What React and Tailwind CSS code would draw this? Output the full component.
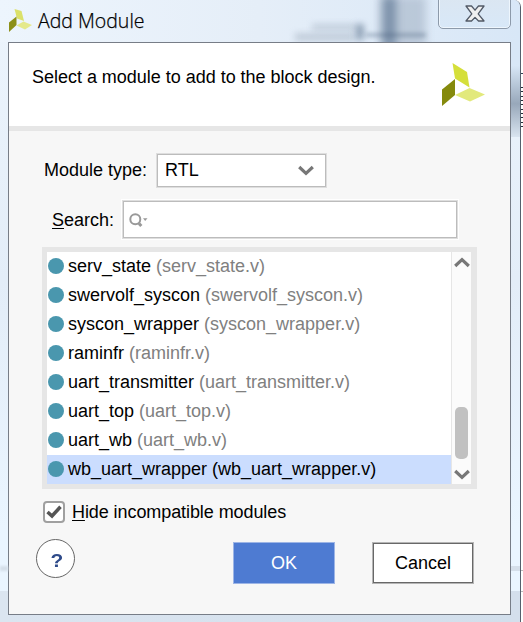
const modules = [
  { name: "serv_state", file: "(serv_state.v)" },
  { name: "swervolf_syscon", file: "(swervolf_syscon.v)" },
  { name: "syscon_wrapper", file: "(syscon_wrapper.v)" },
  { name: "raminfr", file: "(raminfr.v)" },
  { name: "uart_transmitter", file: "(uart_transmitter.v)" },
  { name: "uart_top", file: "(uart_top.v)" },
  { name: "uart_wb", file: "(uart_wb.v)" },
  { name: "wb_uart_wrapper", file: "(wb_uart_wrapper.v)", selected: true },
];

function Logo({ className }) {
  return (
    <svg viewBox="0 0 43 43" className={className} preserveAspectRatio="none">
      <path d="M10.5 0 25 9 27.5 24.5 13 15.5Z" fill="#d5df3a" />
      <path d="M0 26.5 13 16V32L0 43Z" fill="#858a0c" />
      <path d="M13 32 27.5 25 43 31.5 28 38.5Z" fill="#e2e97c" />
    </svg>
  );
}

function SmallLogo({ className }) {
  return (
    <svg viewBox="0 0 23 23" className={className}>
      <path d="M5.5 0 12.5 2 15 12 8 9.5Z" fill="#dbe16a" />
      <path d="M0 13.5 7.5 7.5V16L0 23Z" fill="#8c9018" />
      <path d="M7.5 16.5 14.5 12.5 23 16 16 20.5Z" fill="#e4e98c" />
    </svg>
  );
}

function Chevron({ up }) {
  return (
    <svg viewBox="0 0 16 11" className="block h-[11px] w-4">
      <path d={up ? "M1.2 9 8 2.7 14.8 9" : "M1.2 2 8 8.3 14.8 2"} fill="none" stroke="#777" strokeWidth="3.2" />
    </svg>
  );
}

function TitleBar() {
  return (
    <div className="relative flex h-[42px] shrink-0 items-start overflow-hidden bg-linear-to-r from-[#edf5fd] via-[#e5eef8] to-[#d8e7f7]">
      <div className="absolute top-[24px] left-[312px] h-1.5 w-[44px] bg-[#8795a6]/35 blur-[3px]" />
      <div className="absolute top-[33px] left-[295px] h-2 w-[60px] bg-[#8795a6]/35 blur-[3px]" />
      <div className="absolute top-[24px] left-[356px] h-[16px] w-2 bg-[#465d79]/50 blur-[3px]" />
      <div className="absolute -top-1 left-[379px] h-[52px] w-[47px] bg-[#a3b3c5]/60 blur-[4px]" />
      <div className="absolute -top-1 left-[383px] h-[52px] w-[13px] bg-[#526d8b]/60 blur-[4px]" />
      <div className="absolute top-[33px] left-[366px] h-1 w-[60px] bg-[#465d79]/35 blur-[2px]" />
      <SmallLogo className="mt-[9px] ml-[9px] h-[23px] w-[23px] shrink-0" />
      <span className="mt-[8px] ml-[6px] font-['Open_Sans',sans-serif] text-[19.5px] leading-[26px] font-light whitespace-nowrap text-black [-webkit-text-stroke:0.25px_black]">
        Add Module
      </span>
      <div className="absolute top-[-6px] left-[438px] flex h-[35px] w-[73px] items-center justify-center rounded-[5px] border border-[#8d9aaa] bg-linear-to-b from-[#dbe6f1] to-[#d8e8f8] shadow-[inset_0_0_0_1px_#eef6fd]">
        <svg viewBox="0 0 20 18" className="mt-[5px] h-[18px] w-5">
          <path d="M1 1H6.5L10 5.2 13.5 1H19L13.2 8.8 19 16H13.5L10 12.4 6.5 16H1L6.8 8.8Z" fill="#f0f0f0" stroke="#515966" strokeWidth="1.3" strokeLinejoin="round" />
        </svg>
      </div>
    </div>
  );
}

function ModuleList() {
  return (
    <div className="mt-[8px] ml-[33px] flex h-[242px] w-[435px] border-5 border-r-6 border-[#e6e6e6] bg-white">
      <div className="w-[404px]">
        {modules.map((m) => (
          <div key={m.name} className={`flex h-[29px] items-center pl-px whitespace-nowrap ${m.selected ? "bg-[#cbddfe]" : ""}`}>
            <span className="mb-px size-4 shrink-0 rounded-full bg-[#4a97ae]" />
            <span className="ml-1">{m.name}</span>
            <span className={`ml-[5px] ${m.selected ? "text-black" : "text-[#808080]"}`}>{m.file}</span>
          </div>
        ))}
      </div>
      <div className="flex w-5 flex-col items-center border-l border-[#e6e6e6] bg-[#fbfbfb] pt-[5px] pb-[4px]">
        <Chevron up />
        <div className="mt-auto mb-[10px] h-[52px] w-[13px] rounded-[5px] bg-[#c1c1c1]" />
        <Chevron />
      </div>
    </div>
  );
}

export default function App() {
  return (
    <div className="flex h-[622px] w-[523px] overflow-hidden bg-white font-['Liberation_Sans',Arial,sans-serif] text-[18px] leading-[21px] text-black">
      <div className="flex h-[622px] w-[521px] shrink-0 flex-col overflow-hidden rounded-tr-[7px] border-r border-[#56606d] bg-linear-to-b from-[#edf5fd] via-[#e3edf8] via-45% to-[#eaf5ff] to-85%">
        <TitleBar />
        <div className="flex h-[580px] shrink-0">
          <div className="flex w-2 flex-col">
            <div className="mt-[524px] h-[5px] bg-[#d5dfea] blur-[1px]" />
            <div className="mt-5 grow bg-[#dbe5f0]" />
          </div>
          <div className="flex w-[503px] shrink-0 flex-col">
            <div className="h-[573px] border border-[#777d87] bg-[#f7f7f7]">
              <div className="flex h-[88px] items-start justify-between border-b-5 border-[#e6e6e6] bg-white pr-[25px] pl-[23px]">
                <span className="mt-[24px] tracking-[-0.02px] whitespace-nowrap">Select a module to add to the block design.</span>
                <Logo className="mt-[20px] h-[43px] w-[43px]" />
              </div>
              <div className="mt-[22px] flex h-[34px] items-center pl-[35px]">
                <span className="w-[112px] whitespace-nowrap">Module type:</span>
                <div className="flex h-[35px] w-[171px] items-center justify-between border border-[#dedede] bg-white pr-[12px] pl-[8px] shadow-[inset_0_0_0_1px_#bcbcbc]">
                  <span>RTL</span>
                  <Chevron />
                </div>
              </div>
              <div className="mt-[13px] flex h-[39px] items-center pl-[43px]">
                <span className="mt-[2px] w-[70px] whitespace-nowrap"><span className="underline decoration-1 underline-offset-2">S</span>earch:</span>
                <div className="flex h-[39px] w-[336px] items-center border border-[#dedede] bg-white pl-[6px] shadow-[inset_0_0_0_1px_#bcbcbc,0_0_0_1px_white]">
                  <svg viewBox="0 0 19 15" className="mt-px h-[15px] w-[19px]">
                    <circle cx="6.3" cy="6.3" r="5" fill="none" stroke="#999" strokeWidth="2" />
                    <path d="m10 10.5 2.3 2.6" stroke="#999" strokeWidth="3" />
                    <path d="M14 5.3h4.5L16.2 8Z" fill="#999" />
                  </svg>
                </div>
              </div>
              <ModuleList />
              <div className="mt-[12px] flex h-[22px] items-center pl-[34px]">
                <div className="flex size-[22px] items-center justify-center rounded-[4px] border-2 border-[#a0a0a0] bg-white">
                  <svg viewBox="0 0 16 14" className="h-[14px] w-4">
                    <path d="M1.5 7 6 11 14.5 1.8" fill="none" stroke="#555" strokeWidth="3.5" />
                  </svg>
                </div>
                <span className="ml-[7px] tracking-[-0.08px] whitespace-nowrap"><span className="underline decoration-1 underline-offset-2">H</span>ide incompatible modules</span>
              </div>
              <div className="mt-[16px] flex h-[45px] items-start pl-[27px]">
                <div className="flex size-[39px] items-center justify-center rounded-full border border-[#666] bg-white pt-[3px] pl-[2px] text-[19px] font-bold text-[#2f4b8a]"><span className="scale-x-110">?</span></div>
                <div className="mt-[3px] ml-[158px] flex h-[42px] w-[102px] items-center justify-center border border-[#9db5e6] bg-[#4e7bd2] text-white">OK</div>
                <div className="mt-[3px] ml-[37px] flex h-[42px] w-[102px] items-center justify-center border border-[#b5b5b5] bg-white shadow-[inset_0_0_0_1px_#686868]">Cancel</div>
              </div>
            </div>
            <div className="grow bg-linear-to-r from-[#dbe5f0] to-[#d2dfec]" />
          </div>
          <div className="flex grow flex-col">
            <div className="h-[95px] bg-linear-to-b from-[#d8e7f7] from-25% via-[#98a8ba] via-65% to-[#d9e4f0]" />
            <div className="mt-[429px] h-[5px] bg-[#d5dfea]" />
            <div className="mt-5 grow bg-[#d4dfec]" />
          </div>
        </div>
      </div>
      <div className="flex w-[2px] flex-col pt-[73px]">
        <div className="h-px bg-[#345]" />
        <div className="mt-[13px] flex h-[40px] flex-col justify-between">
          {[0, 1, 2, 3, 4, 5, 6, 7, 8, 9].map((n) => (
            <div key={n} className="h-px bg-[#222c38]" />
          ))}
        </div>
        <div className="mt-[443px] h-px bg-[#bbb]" />
        <div className="mt-5 h-px bg-[#bbb]" />
      </div>
    </div>
  );
}
